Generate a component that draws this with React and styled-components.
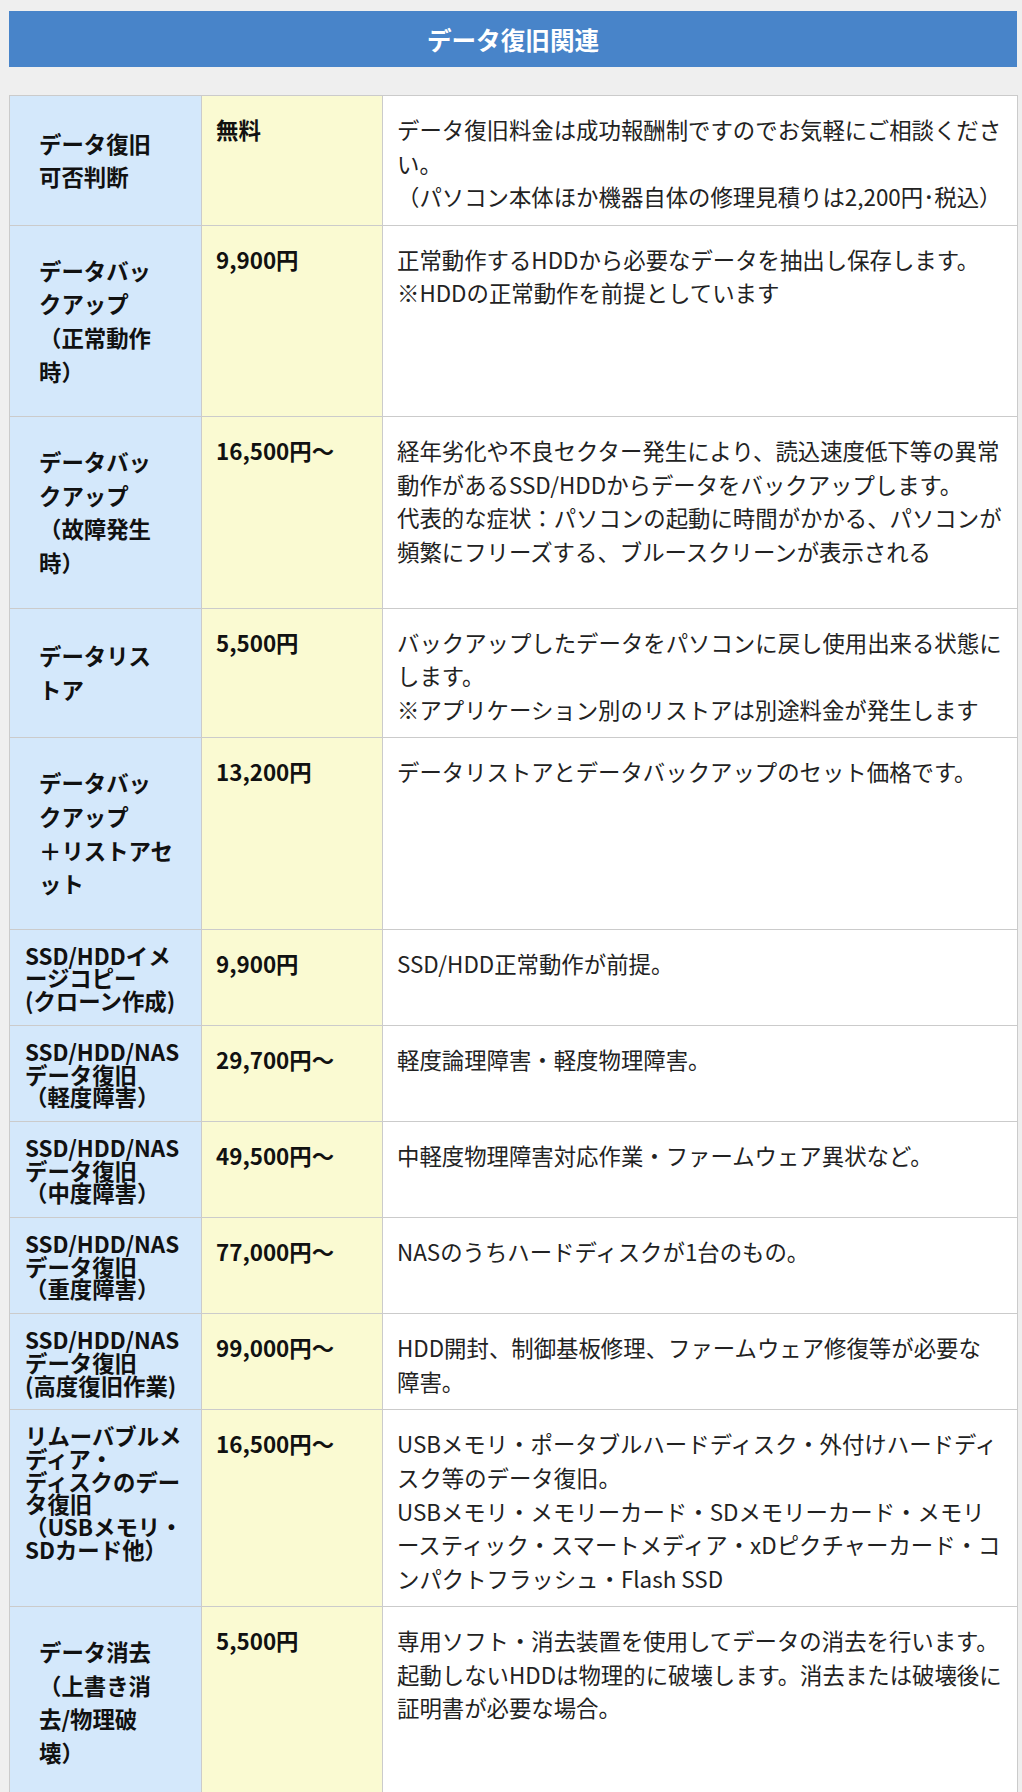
import React from "react"
import styled, { createGlobalStyle } from "styled-components"

const GlobalStyle = createGlobalStyle`
  body {
    margin: 0;
    background: #efefef;
    font-family: "Noto Sans CJK JP", "Noto Sans", sans-serif;
    color: #222;
  }
`

const Page = styled.div`
  padding: 11px 5px 0 9px;
`

const Heading = styled.h2`
  margin: 0 0 28px;
  height: 56px;
  display: flex;
  align-items: center;
  justify-content: center;
  background: #4884c9;
  color: #fff;
  font-size: 24.6px;
  font-weight: 700;
  letter-spacing: 0;
`

const PriceTable = styled.table`
  width: 1008px;
  border-collapse: collapse;
  table-layout: fixed;
  background: #fff;
`

const Cell = styled.td`
  border: 1px solid #cbcbcb;
  font-size: 22.4px;
  white-space: pre;
`

// left column: service name
const Label = styled(Cell)`
  background: #d4e8fb;
  color: #111;
  font-weight: 700;
  vertical-align: ${(p) => (p.$compact ? "top" : "middle")};
  line-height: ${(p) => (p.$compact ? "22.7px" : "33.6px")};
  padding: ${(p) => (p.$compact ? "14px 8px 13px 15px" : "28px 8px 28px 29px")};
`

const Price = styled(Cell)`
  background: #fafad2;
  color: #111;
  font-weight: 700;
  vertical-align: top;
  line-height: 33.6px;
  padding: 17px 14px 11px;
`

const Detail = styled(Cell)`
  vertical-align: top;
  line-height: 33.6px;
  padding: 17px 14px 11px;
`

const rows = [
  {
    label: "データ復旧\n可否判断",
    price: "無料",
    detail:
      "データ復旧料金は成功報酬制ですのでお気軽にご相談くださ\nい。\n（パソコン本体ほか機器自体の修理見積りは2,200円･税込）",
  },
  {
    label: "データバッ\nクアップ\n（正常動作\n時）",
    price: "9,900円",
    detail:
      "正常動作するHDDから必要なデータを抽出し保存します。\n※HDDの正常動作を前提としています",
  },
  {
    label: "データバッ\nクアップ\n（故障発生\n時）",
    price: "16,500円〜",
    detail:
      "経年劣化や不良セクター発生により、読込速度低下等の異常\n動作があるSSD/HDDからデータをバックアップします。\n代表的な症状：パソコンの起動に時間がかかる、パソコンが\n頻繁にフリーズする、ブルースクリーンが表示される",
  },
  {
    label: "データリス\nトア",
    price: "5,500円",
    detail:
      "バックアップしたデータをパソコンに戻し使用出来る状態に\nします。\n※アプリケーション別のリストアは別途料金が発生します",
  },
  {
    label: "データバッ\nクアップ\n＋リストアセ\nット",
    price: "13,200円",
    detail: "データリストアとデータバックアップのセット価格です。",
  },
  {
    label: "SSD/HDDイメ\nージコピー\n(クローン作成)",
    compact: true,
    price: "9,900円",
    detail: "SSD/HDD正常動作が前提。",
  },
  {
    label: "SSD/HDD/NAS\nデータ復旧\n（軽度障害）",
    compact: true,
    price: "29,700円〜",
    detail: "軽度論理障害・軽度物理障害。",
  },
  {
    label: "SSD/HDD/NAS\nデータ復旧\n（中度障害）",
    compact: true,
    price: "49,500円〜",
    detail: "中軽度物理障害対応作業・ファームウェア異状など。",
  },
  {
    label: "SSD/HDD/NAS\nデータ復旧\n（重度障害）",
    compact: true,
    price: "77,000円〜",
    detail: "NASのうちハードディスクが1台のもの。",
  },
  {
    label: "SSD/HDD/NAS\nデータ復旧\n(高度復旧作業)",
    compact: true,
    price: "99,000円〜",
    detail: "HDD開封、制御基板修理、ファームウェア修復等が必要な\n障害。",
  },
  {
    label: "リムーバブルメ\nディア・\nディスクのデー\nタ復旧\n（USBメモリ・\nSDカード他）",
    compact: true,
    price: "16,500円〜",
    detail:
      "USBメモリ・ポータブルハードディスク・外付けハードディ\nスク等のデータ復旧。\nUSBメモリ・メモリーカード・SDメモリーカード・メモリ\nースティック・スマートメディア・xDピクチャーカード・コ\nンパクトフラッシュ・Flash SSD",
  },
  {
    label: "データ消去\n（上書き消\n去/物理破\n壊）",
    price: "5,500円",
    detail:
      "専用ソフト・消去装置を使用してデータの消去を行います。\n起動しないHDDは物理的に破壊します。消去または破壊後に\n証明書が必要な場合。",
  },
]

const App = () => {
  return (
    <>
      <GlobalStyle />
      <Page>
        <Heading>データ復旧関連</Heading>
        <PriceTable>
          <colgroup>
            <col style={{ width: 192 }} />
            <col style={{ width: 181 }} />
            <col style={{ width: 635 }} />
          </colgroup>
          <tbody>
            {rows.map((row, i) => (
              <tr key={i}>
                <Label $compact={row.compact}>{row.label}</Label>
                <Price>{row.price}</Price>
                <Detail>{row.detail}</Detail>
              </tr>
            ))}
          </tbody>
        </PriceTable>
      </Page>
    </>
  )
}

export default App
